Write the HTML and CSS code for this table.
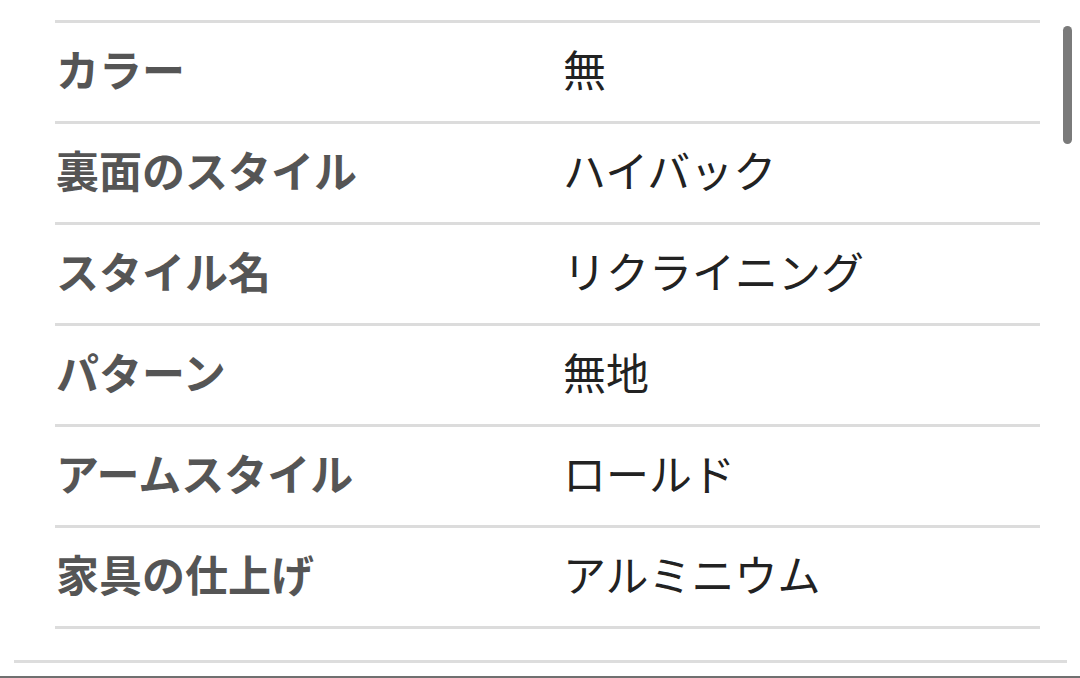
FILE: index.html
```html
<!DOCTYPE html>
<html lang="ja">
<head>
<meta charset="utf-8">
<link rel="stylesheet" href="styles.css">
</head>
<body>
<div class="page">
  <div class="specs">
    <div class="row"><div class="label">カラー</div><div class="value">無</div></div>
    <div class="row"><div class="label">裏面のスタイル</div><div class="value">ハイバック</div></div>
    <div class="row"><div class="label">スタイル名</div><div class="value">リクライニング</div></div>
    <div class="row"><div class="label">パターン</div><div class="value">無地</div></div>
    <div class="row"><div class="label">アームスタイル</div><div class="value">ロールド</div></div>
    <div class="row"><div class="label">家具の仕上げ</div><div class="value">アルミニウム</div></div>
    <div class="row end"></div>
  </div>
  <div class="divider"></div>
  <div class="bottom-edge"></div>
  <div class="scrollbar"></div>
</div>
</body>
</html>
```
FILE: styles.css
```css
html, body {
  margin: 0;
  padding: 0;
  background: #ffffff;
}
body {
  font-family: "Noto Sans CJK JP", "Noto Sans", sans-serif;
  width: 1080px;
  height: 678px;
  overflow: hidden;
}
.page {
  position: relative;
  width: 1080px;
  height: 678px;
  padding-top: 20px;
  box-sizing: border-box;
  display: flex;
  flex-direction: column;
}
.specs {
  margin-left: 55px;
  width: 985px;
  display: flex;
  flex-direction: column;
}
.row {
  display: grid;
  grid-template-columns: 508px 1fr;
  align-items: center;
  height: 98px;
  border-top: 3px solid #dcdcdc;
  font-size: 43px;
  line-height: 1;
}
.row > div {
  position: relative;
  top: -4px;
}
.row.end {
  height: 0;
}
.label {
  padding-left: 1px;
  font-weight: 700;
  color: #555555;
}
.value {
  color: #222222;
  font-weight: 400;
}
.divider {
  margin-top: 31px;
  margin-left: 14px;
  width: 1053px;
  height: 3px;
  background: #dddddd;
}
.bottom-edge {
  margin-top: auto;
  height: 2px;
  background: #707070;
}
.scrollbar {
  position: absolute;
  left: 1063px;
  top: 26px;
  width: 9px;
  height: 118px;
  border-radius: 5px;
  background: #7a7a7a;
}
```
